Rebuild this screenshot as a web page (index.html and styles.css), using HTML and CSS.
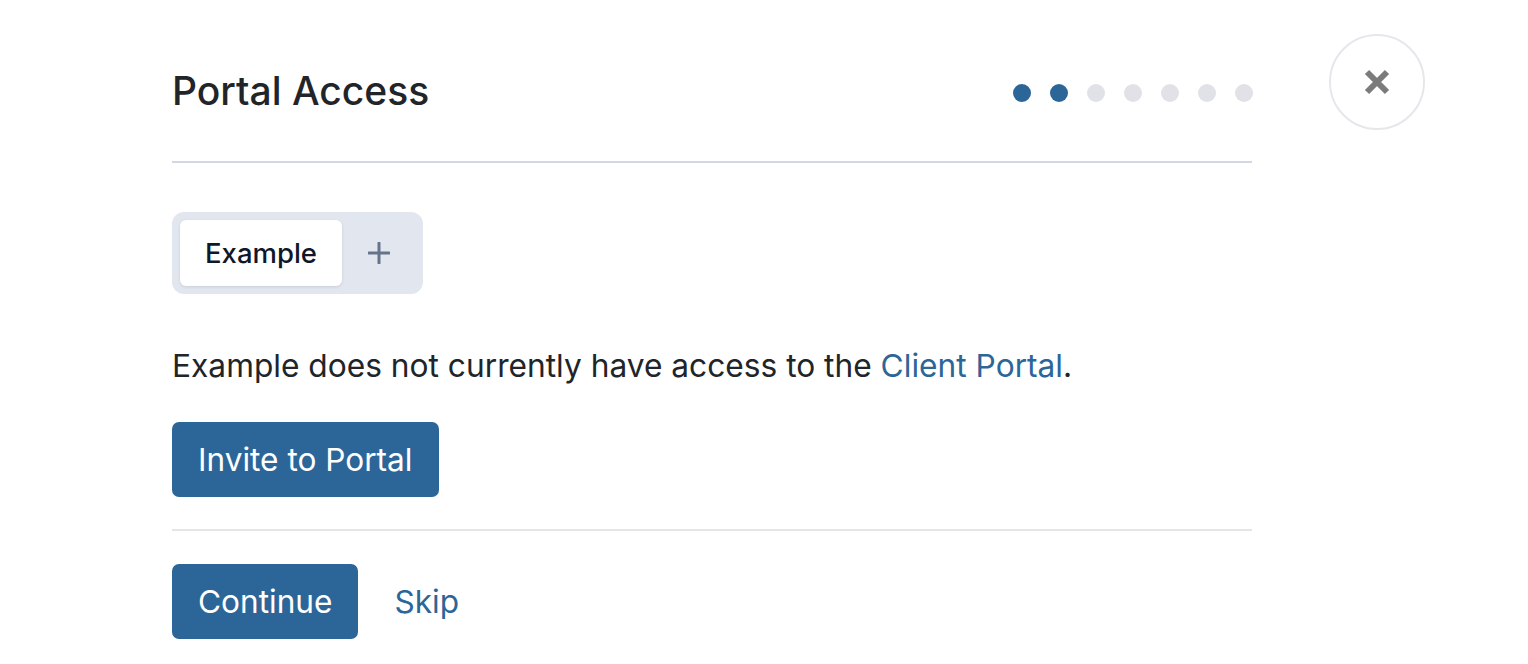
FILE: index.html
```html
<!DOCTYPE html>
<html lang="en">
<head>
<meta charset="utf-8">
<title>Portal Access</title>
<link rel="stylesheet" href="styles.css">
</head>
<body>
<div class="page">
  <main class="panel">
    <header class="header">
      <h1 class="title">Portal Access</h1>
      <div class="steps">
        <span class="dot active"></span>
        <span class="dot active"></span>
        <span class="dot"></span>
        <span class="dot"></span>
        <span class="dot"></span>
        <span class="dot"></span>
        <span class="dot"></span>
      </div>
    </header>
    <div class="tabs">
      <button class="tab selected">Example</button>
      <button class="tab add" aria-label="Add">
        <svg width="22" height="22" viewBox="0 0 22 22"><path d="M11 1v20M1 11h20" stroke="#64748b" stroke-width="3" stroke-linecap="round"/></svg>
      </button>
    </div>
    <p class="message">Example does not currently have access to the <a href="#" class="link">Client Portal</a>.</p>
    <button class="btn">Invite to Portal</button>
    <div class="footer">
      <button class="btn">Continue</button>
      <a href="#" class="link skip">Skip</a>
    </div>
  </main>
  <button class="close" aria-label="Close">
    <svg width="26" height="26" viewBox="0 0 26 26"><path d="M3 3L23 23M23 3L3 23" stroke="#7b7b7b" stroke-width="6"/></svg>
  </button>
</div>
</body>
</html>
```

FILE: styles.css
```css
* { box-sizing: border-box; }
html, body { margin: 0; padding: 0; background: #fff; }
body { font-family: Inter, "Noto Sans", sans-serif; color: #212529; }

.page {
  display: flex;
  align-items: flex-start;
  padding: 34px 0 0 172px;
  gap: 77px;
}

.panel { width: 1080px; display: flex; flex-direction: column; align-items: flex-start; }

.header {
  width: 100%;
  display: flex;
  align-items: center;
  justify-content: space-between;
  height: 129px;
  padding-bottom: 14px;
  border-bottom: 2px solid #cfd8e3;
}
.title { margin: 0; font-size: 39px; font-weight: 500; color: #212529; letter-spacing: 0; }

.steps { display: flex; gap: 19px; margin-top: 4px; margin-right: -1px; }
.dot { width: 18px; height: 18px; border-radius: 50%; background: #e0e2e7; }
.dot.active { background: #2c6699; }

.tabs {
  margin-top: 49px;
  display: flex;
  align-items: stretch;
  background: #e2e7ef;
  border-radius: 12px;
  padding: 8px;
  width: 251px;
  height: 82px;
}
.tab {
  border: 0;
  font-family: inherit;
  background: transparent;
  cursor: pointer;
  padding: 0;
}
.tab.selected {
  width: 162px;
  background: #fff;
  border-radius: 6px;
  box-shadow: 0 1px 3px rgba(15, 23, 42, 0.12);
  font-size: 27.5px;
  font-weight: 500;
  color: #0f172a;
}
.tab.add { flex: 1; display: flex; align-items: center; justify-content: center; }

.message { margin: 52px 0 0; font-size: 31.7px; line-height: 40px; color: #212529; }
.link { color: #2c6699; text-decoration: none; }

.btn {
  margin-top: 36px;
  height: 75px;
  padding: 0 26px;
  border: 0;
  border-radius: 7px;
  background: #2c6699;
  color: #fff;
  font-family: inherit;
  font-size: 31.6px;
  cursor: pointer;
}

.footer {
  width: 100%;
  margin-top: 32px;
  border-top: 2px solid #e5e5e5;
  display: flex;
  align-items: center;
  gap: 36px;
}
.footer .btn { margin-top: 33px; }
.skip { font-size: 31.6px; margin-top: 33px; }

.close {
  flex: none;
  width: 96px;
  height: 96px;
  border-radius: 50%;
  border: 2px solid #e5e7eb;
  background: #fff;
  display: flex;
  align-items: center;
  justify-content: center;
  padding: 0;
  cursor: pointer;
}
```
